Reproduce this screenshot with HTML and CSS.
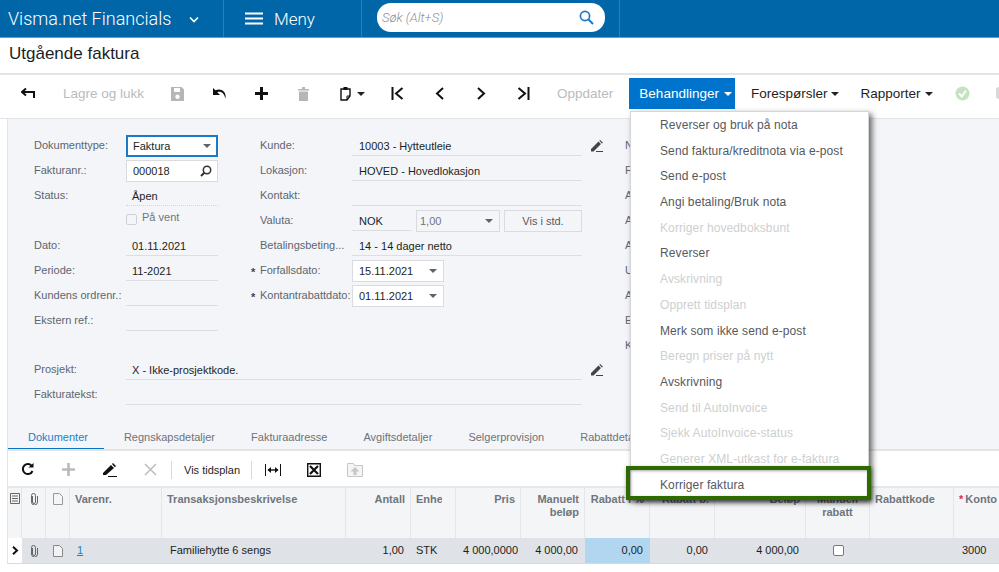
FILE: index.html
```html
<!DOCTYPE html>
<html lang="no">
<head>
<meta charset="utf-8">
<title>Utgående faktura</title>
<link rel="stylesheet" href="styles.css">
</head>
<body>
<header class="topbar">
  <div class="brand">Visma.net Financials
    <svg class="brand-chev" width="10" height="7" viewBox="0 0 10 7"><path d="M1 1.500 5 5.500 9 1.500" fill="none" stroke="#fff" stroke-width="1.600"/></svg>
  </div>
  <div class="menu-btn">
    <svg width="18" height="13" viewBox="0 0 18 13"><path d="M0 1.500h18M0 6.500h18M0 11.500h18" stroke="#fff" stroke-width="2.200"/></svg>
    <span>Meny</span>
  </div>
  <div class="search-wrap">
    <div class="search"><span>Søk (Alt+S)</span>
      <svg width="15" height="15" viewBox="0 0 15 15"><circle cx="6" cy="6" r="4.600" fill="none" stroke="#1a78c8" stroke-width="1.700"/><path d="M9.500 9.500 14 14" stroke="#1a78c8" stroke-width="1.900"/></svg>
    </div>
  </div>
</header>
<h1 class="title">Utgående faktura</h1>
<nav class="toolbar">
  <span class="tb first"><svg width="14" height="11" viewBox="0 0 14 11"><path d="M5 .5 1 4l4 3.500M1 4h12v6" fill="none" stroke="#111" stroke-width="2"/></svg></span>
  <span class="tb-text save-close">Lagre og lukk</span>
  <span class="tb"><svg width="13" height="14" viewBox="0 0 13 14"><path fill-rule="evenodd" d="M0 0h10.500L13 2.500V14H0zM3 1v4h6V1zM6.500 7.500a2.200 2.200 0 1 0 0 4.400 2.200 2.200 0 0 0 0-4.400z" fill="#b4b6b8"/></svg></span>
  <span class="tb"><svg width="15" height="11" viewBox="0 0 15 11"><path d="M1 0v7h7L5.300 4.300C8.300 3 12 4.500 13.300 10.500 15 5 10 -.5 3.500 2.300z" fill="#111"/></svg></span>
  <span class="tb"><svg width="13" height="13" viewBox="0 0 13 13"><path d="M6.500 0v13M0 6.500h13" stroke="#111" stroke-width="3"/></svg></span>
  <span class="tb"><svg width="11" height="14" viewBox="0 0 11 14"><path d="M0 2h11v1.500H0zM4 0h3v2H4zM1 4.500h9V14H1z" fill="#b4b6b8"/></svg></span>
  <span class="tb paste"><svg width="12" height="15" viewBox="0 0 12 15"><path d="M1 3h9v7l-3 4H1z" fill="none" stroke="#111" stroke-width="1.400"/><path d="M3.500 1h4v3h-4z" fill="#111"/><path d="M7 14v-4h3" fill="none" stroke="#111"/></svg><i class="caret dark"></i></span>
  <span class="tb"><svg width="13" height="13" viewBox="0 0 13 13"><path d="M1.500 0v13M11.500 1 5 6.500 11.500 12" fill="none" stroke="#111" stroke-width="2"/></svg></span>
  <span class="tb"><svg width="9" height="13" viewBox="0 0 9 13"><path d="M8 1 2 6.500 8 12" fill="none" stroke="#111" stroke-width="2"/></svg></span>
  <span class="tb"><svg width="9" height="13" viewBox="0 0 9 13"><path d="M1 1l6 5.500L1 12" fill="none" stroke="#111" stroke-width="2"/></svg></span>
  <span class="tb"><svg width="13" height="13" viewBox="0 0 13 13"><path d="M11.500 0v13M1.500 1 8 6.500 1.500 12" fill="none" stroke="#111" stroke-width="2"/></svg></span>
  <span class="tb-text refresh">Oppdater</span>
  <span class="tb-menu active">Behandlinger<i class="caret light"></i></span>
  <span class="tb-menu">Forespørsler<i class="caret dark"></i></span>
  <span class="tb-menu">Rapporter<i class="caret dark"></i></span>
  <span class="tb check"><svg width="15" height="15" viewBox="0 0 15 15"><circle cx="7.500" cy="7.500" r="7" fill="#c5e3c0"/><path d="M4 7.500 6.800 10.500 11 4.500" fill="none" stroke="#fff" stroke-width="2"/></svg></span>
  <span class="edge-dot"></span>
</nav>

<main class="card">
  <section class="form">
    <div class="form-cols">
      <div class="col col-a">
        <div class="row"><label class="lbl">Dokumenttype:</label><div class="box focus fw">Faktura<i class="caret gray"></i></div></div>
        <div class="row"><label class="lbl">Fakturanr.:</label><div class="box fw">000018
          <svg class="glass" width="12" height="12" viewBox="0 0 12 12"><circle cx="7" cy="5" r="3.700" fill="none" stroke="#333" stroke-width="1.500"/><path d="M4.300 7.700 1 11" stroke="#333" stroke-width="2"/></svg></div></div>
        <div class="row"><label class="lbl">Status:</label><div class="val dotted fw">Åpen</div></div>
        <div class="row hold"><label class="lbl"></label><span class="chk faint"></span><span class="hold-text">På vent</span></div>
        <div class="row"><label class="lbl">Dato:</label><div class="val fw">01.11.2021</div></div>
        <div class="row"><label class="lbl">Periode:</label><div class="val fw">11-2021</div></div>
        <div class="row"><label class="lbl">Kundens ordrenr.:</label><div class="val fw"></div></div>
        <div class="row"><label class="lbl">Ekstern ref.:</label><div class="val fw"></div></div>
      </div>
      <div class="col col-b">
        <div class="row"><label class="lbl">Kunde:</label><div class="val wide">10003 - Hytteutleie</div>
          <svg class="pen" width="12" height="12" viewBox="0 0 12 12"><path d="M0 9 7.500 1.500l2.500 2.500L2.500 11.500H0zM8.300.8 9.200 0 12 2.800 11 3.500z" fill="#444"/><path d="M5 11.500h7" stroke="#444"/></svg></div>
        <div class="row"><label class="lbl">Lokasjon:</label><div class="val wide">HOVED - Hovedlokasjon</div></div>
        <div class="row"><label class="lbl">Kontakt:</label><div class="val wide"></div></div>
        <div class="row"><label class="lbl">Valuta:</label><div class="val cur">NOK</div><div class="box rate muted">1,00<i class="caret gray"></i></div><div class="box std">Vis i std.</div></div>
        <div class="row"><label class="lbl">Betalingsbeting...</label><div class="val wide">14 - 14 dager netto</div></div>
        <div class="row"><label class="lbl req">Forfallsdato:</label><div class="box date">15.11.2021<i class="caret gray"></i></div></div>
        <div class="row"><label class="lbl req">Kontantrabattdato:</label><div class="box date">01.11.2021<i class="caret gray"></i></div></div>
      </div>
      <div class="col col-c">
        <div class="row"><label class="lbl">N</label></div>
        <div class="row"><label class="lbl">F</label></div>
        <div class="row"><label class="lbl">A</label></div>
        <div class="row"><label class="lbl">A</label></div>
        <div class="row"><label class="lbl">A</label></div>
        <div class="row"><label class="lbl">U</label></div>
        <div class="row"><label class="lbl">A</label></div>
        <div class="row"><label class="lbl">E</label></div>
        <div class="row"><label class="lbl">K</label></div>
      </div>
    </div>
    <div class="row"><label class="lbl">Prosjekt:</label><div class="val full">X - Ikke-prosjektkode.</div>
      <svg class="pen" width="12" height="12" viewBox="0 0 12 12"><path d="M0 9 7.500 1.500l2.500 2.500L2.500 11.500H0zM8.300.8 9.200 0 12 2.800 11 3.500z" fill="#444"/><path d="M5 11.500h7" stroke="#444"/></svg></div>
    <div class="row"><label class="lbl">Fakturatekst:</label><div class="val full"></div></div>
  </section>

  <div class="tabs">
    <span class="tab on">Dokumenter</span>
    <span class="tab">Regnskapsdetaljer</span>
    <span class="tab">Fakturaadresse</span>
    <span class="tab">Avgiftsdetaljer</span>
    <span class="tab">Selgerprovisjon</span>
    <span class="tab">Rabattdetaljer</span>
  </div>

  <div class="gridbar">
    <span class="gb"><svg width="13" height="13" viewBox="0 0 13 13"><path d="M11 3.200A5 5 0 1 0 11.500 8" fill="none" stroke="#111" stroke-width="2"/><path d="M7.500 4.500h5V0z" fill="#111"/></svg></span>
    <span class="gb"><svg width="13" height="13" viewBox="0 0 13 13"><path d="M6.500 0v13M0 6.500h13" stroke="#b8babc" stroke-width="2.600"/></svg></span>
    <span class="gb"><svg width="14" height="14" viewBox="0 0 14 14"><path d="M0 10 8 2l3 3-8 7H0zM9 1l1-1 3 3-1.200 1.200z" fill="#111"/><path d="M5 13.500h9" stroke="#111"/></svg></span>
    <span class="gb"><svg width="13" height="13" viewBox="0 0 13 13"><path d="M1 1l11 11M12 1 1 12" stroke="#bcbec0" stroke-width="1.600"/></svg></span>
    <span class="sep"></span>
    <span class="gb-text">Vis tidsplan</span>
    <span class="sep"></span>
    <span class="gb"><svg width="16" height="12" viewBox="0 0 16 12"><path d="M.5 0v12M15.500 0v12" stroke="#111"/><path d="M3 6h10" stroke="#111" stroke-width="1.400"/><path d="M6 3 2.500 6 6 9zM10 3l3.500 3L10 9z" fill="#111"/></svg></span>
    <span class="gb"><svg width="14" height="14" viewBox="0 0 14 14"><path d="M.7.700h12.600v12.600H.7z" fill="#fff" stroke="#111" stroke-width="1.400"/><path d="M3 3l8 8M11 3l-8 8" stroke="#111" stroke-width="2.200"/></svg></span>
    <span class="gb"><svg width="16" height="15" viewBox="0 0 16 15"><path d="M.5 3.500V1.500h6l1 2h8v11H.5z" fill="#f5f5f5" stroke="#c4c6c8"/><path d="M8 5 3.500 9.500h3V13h3V9.500h3z" fill="#c4c6c8"/></svg></span>
  </div>

  <div class="grid">
    <div class="gh icon-cell"><svg width="10" height="11" viewBox="0 0 10 11"><path d="M.5.500h9v10h-9zM2 3h6M2 5.500h6M2 8h6" fill="none" stroke="#666"/></svg></div>
    <div class="gh icon-cell"><svg class="clip" width="8" height="12" viewBox="0 0 8 12"><path d="M2.500 3v6a1.500 1.500 0 0 0 3 0V2.500a2 2 0 0 0-4 0V9a3 3 0 0 0 6 0V3" fill="none" stroke="#666"/></svg></div>
    <div class="gh icon-cell"><svg width="10" height="12" viewBox="0 0 10 12"><path d="M.5.500h6l3 3v8h-9z" fill="none" stroke="#999"/></svg></div>
    <div class="gh">Varenr.</div>
    <div class="gh">Transaksjonsbeskrivelse</div>
    <div class="gh r">Antall</div>
    <div class="gh"><span class="clipped">Enhet</span></div>
    <div class="gh r">Pris</div>
    <div class="gh r">Manuelt beløp</div>
    <div class="gh r nw">Rabatt i %</div>
    <div class="gh r nw">Rabatt b.</div>
    <div class="gh r">Beløp</div>
    <div class="gh c">Manuell rabatt</div>
    <div class="gh">Rabattkode</div>
    <div class="gh nw"><b class="star">*</b>Konto</div>

    <div class="gd arrow"><svg width="7" height="9" viewBox="0 0 7 9"><path d="M1 .8 5 4.500 1 8.200" fill="none" stroke="#111" stroke-width="2"/></svg></div>
    <div class="gd icon-cell"><svg width="8" height="12" viewBox="0 0 8 12"><path d="M2.500 3v6a1.500 1.500 0 0 0 3 0V2.500a2 2 0 0 0-4 0V9a3 3 0 0 0 6 0V3" fill="none" stroke="#666"/></svg></div>
    <div class="gd icon-cell"><svg width="10" height="12" viewBox="0 0 10 12"><path d="M.5.500h6l3 3v8h-9z" fill="#f2f3f4" stroke="#888"/></svg></div>
    <div class="gd"><a class="link">1</a></div>
    <div class="gd desc">Familiehytte 6 sengs</div>
    <div class="gd r">1,00</div>
    <div class="gd unit">STK</div>
    <div class="gd r price">4 000,0000</div>
    <div class="gd r">4 000,00</div>
    <div class="gd r sel">0,00</div>
    <div class="gd r">0,00</div>
    <div class="gd r">4 000,00</div>
    <div class="gd c"><span class="chk"></span></div>
    <div class="gd"></div>
    <div class="gd acct">3000</div>
  </div>
</main>

<div class="dropdown">
  <div class="mi">Reverser og bruk på nota</div>
  <div class="mi">Send faktura/kreditnota via e-post</div>
  <div class="mi">Send e-post</div>
  <div class="mi">Angi betaling/Bruk nota</div>
  <div class="mi off">Korriger hovedboksbunt</div>
  <div class="mi">Reverser</div>
  <div class="mi off">Avskrivning</div>
  <div class="mi off">Opprett tidsplan</div>
  <div class="mi">Merk som ikke send e-post</div>
  <div class="mi off">Beregn priser på nytt</div>
  <div class="mi">Avskrivning</div>
  <div class="mi off">Send til AutoInvoice</div>
  <div class="mi off">Sjekk AutoInvoice-status</div>
  <div class="mi off">Generer XML-utkast for e-faktura</div>
  <div class="mi">Korriger faktura</div>
</div>
<div class="callout"></div>
</body>
</html>
```
FILE: styles.css
```css
* { box-sizing: border-box; }
html, body { margin: 0; padding: 0; }
body {
  width: 999px; height: 572px; overflow: hidden; position: relative;
  background: #fff; color: #1b1f24;
  font: 11px "Liberation Sans", Arial, sans-serif;
}
svg { display: block; flex: none; }

/* top bar */
.topbar {
  display: flex; height: 38px; color: #fff;
  background: #0066a8; border-bottom: 1px solid #5c9fd0;
}
.brand {
  width: 224px; padding-left: 8px; display: flex; align-items: center;
  font: 300 18px Roboto, sans-serif; border-right: 1px solid #2a7fb8;
}
.brand-chev { margin-left: 18px; margin-top: 2px; }
.menu-btn {
  width: 138px; padding-left: 21px; display: flex; align-items: center; gap: 11px;
  font: 300 17px Roboto, sans-serif; border-right: 1px solid #2a7fb8;
}
.search-wrap { width: 258px; padding: 3px 0 0 15px; border-right: 1px solid #2a7fb8; }
.search {
  width: 228px; height: 29px; background: #fff; border-radius: 14px;
  display: flex; align-items: center; justify-content: space-between; padding: 0 11px 0 5px;
  color: #8b8f94; font: italic 300 13px Roboto, sans-serif;
}
.title { margin: 0; height: 35px; padding: 6px 0 0 9px; font: 400 17px/20px "Liberation Sans", sans-serif; color: #1b1f24; }

/* toolbar */
.toolbar {
  height: 46px; padding: 3px 0 0 7px; display: flex; align-items: flex-start;
  border-top: 2px solid #e3e4e6; border-bottom: 1px solid #e3e4e6;
  font-size: 13.500px;
}
.tb { width: 42px; height: 31px; display: flex; align-items: center; justify-content: center; flex: none; }
.tb.paste { width: 52px; gap: 5px; padding-left: 4px; }
.tb-text { color: #b9bbbe; line-height: 31px; flex: none; }
.save-close { padding: 0 12px 0 14px; }
.refresh { padding: 0 16px 0 12px; margin-left: 1px; }
.tb-menu { height: 31px; line-height: 31px; padding: 0 7px 0 10px; margin-right: 4px; color: #1b1f24; display: flex; align-items: center; gap: 4px; flex: none; }
.tb-menu.active { background: #0074cc; color: #fff; margin-right: 6px; padding-right: 3px; gap: 5px; }
.check { margin-left: -2px; }
.edge-dot { width: 4px; height: 12px; margin: 9px 0 0 12px; border-radius: 3px 0 0 3px; background: #d8d8d8; }
.caret { display: inline-block; width: 0; height: 0; border: 4px solid transparent; border-bottom: 0; flex: none; }
.caret.dark { border-top-color: #222; }
.caret.light { border-top-color: #fff; }
.caret.gray { border-top-color: #5f6368; }

/* card */
.card { margin-left: 7px; border-left: 1px solid #e3e4e6; }
.form { height: 301px; padding: 14px 0 0 26px; background: #f4f5f8; color: #1b1f24; }
.form-cols { display: flex; height: 224px; }
.col-a { width: 226px; }
.col-b { width: 365px; }
.col-c { width: 60px; }
.row { height: 25px; display: flex; align-items: flex-start; }
.lbl { width: 92px; flex: none; color: #5c6670; line-height: 24px; white-space: nowrap; }
.lbl.req { position: relative; }
.lbl.req::before { content: "*"; position: absolute; left: -9px; top: 2px; color: #444; font-weight: 700; }
.fw { width: 92px; }
.val { height: 23px; line-height: 26px; padding-left: 6px; border-bottom: 1px solid #dcdee1; white-space: nowrap; }
.dotted { border-bottom: 1px dotted #d0d2d5; }
.wide { width: 230px; padding-left: 7px; }
.full { width: 456px; }
.cur { width: 60px; padding-left: 7px; }
.box {
  height: 22px; margin-top: 2px; padding: 0 6px; border: 1px solid #d9dbde; background: #fff;
  display: flex; align-items: center; justify-content: space-between; white-space: nowrap;
}
.focus { border: 1px solid #1a7ac8; box-shadow: inset 0 0 0 1px #1a7ac8; }
.box.rate { width: 84px; margin-left: 4px; background: #f4f5f8; padding-left: 3px; }
.muted { color: #70767c; }
.box.std { width: 78px; margin-left: 4px; background: #f4f5f8; justify-content: center; color: #555b61; }
.box.date { width: 92px; }
.hold { align-items: center; }
.hold-text { color: #70767c; margin: -8px 0 0 5px; }
.chk { display: block; width: 11px; height: 11px; border: 1px solid #777; border-radius: 2px; background: #fff; }
.chk.faint { margin-top: -2px; border-color: #cfd1d4; background: #f4f5f8; }
.pen { margin: 7px 0 0 9px; }
.glass { margin-right: -1px; }

/* tabs */
.tabs { height: 31px; display: flex; background: #f4f5f8; border-bottom: 2px solid #e3e4e6; overflow: hidden; }
.tab { padding: 0 16px 0 20px; line-height: 34px; height: 31px; color: #6d7379; white-space: nowrap; flex: none; }
.tab.on { color: #1d7fc6; border-bottom: 3px solid #0a74c4; }

/* grid toolbar */
.gridbar { height: 37px; display: flex; align-items: center; margin-left: -1px; }
.gb { width: 41px; display: flex; justify-content: center; flex: none; }
.gb-text { padding: 0 11px 0 12px; color: #1b1f24; }
.sep { width: 1px; height: 18px; background: #d5d7da; }

/* grid */
.grid {
  display: grid;
  grid-template-columns: 14px 24px 24px 92px 184px 65px 45px 65px 64px 65px 65px 91px 64px 84px 46px;
  grid-template-rows: 50px 26px;
  border-top: 2px solid #e6e7e9; margin-top: -2px;
}
.gh {
  background: #f4f5f7; padding: 5px 5px 0; border-right: 1px solid #e4e6e8;
  color: #6f767d; font-weight: 700; line-height: 13px; overflow: hidden;
}
.gh.icon-cell { padding: 5px 0 0; display: flex; justify-content: center; }
.gh.r { text-align: right; }
.gh.c { text-align: center; }
.gh.nw { white-space: nowrap; }
.clipped { display: block; width: 26px; overflow: hidden; }
.star { color: #d33; margin-right: 2px; }
.gd {
  background: #dfe2e6; line-height: 25px; padding: 0 7px; border-bottom: 1px solid #d8dadd; white-space: nowrap;
}
.gd.r { text-align: right; }
.gd.c { display: flex; align-items: center; justify-content: center; }
.gd.icon-cell { display: flex; align-items: center; justify-content: center; padding: 0; }
.gd.arrow { background: #fff; display: flex; align-items: center; justify-content: center; padding: 0; }
.gd.desc { padding-left: 8px; }
.gd.unit { padding-left: 5px; }
.gd.price { padding-right: 5px; }
.gd.sel { background: #b3d6f0; }
.gd.acct { padding: 0 0 0 8px; }
.link { color: #1d7fc6; text-decoration: underline; }

/* dropdown overlay */
.dropdown {
  position: absolute; left: 630px; top: 111px; width: 239px; padding: 1px 0 0;
  background: #fff; border: 1px solid #d5d6d8; box-shadow: 3px 3px 6px rgba(0,0,0,.6);
  font-size: 12px; letter-spacing: .1px;
}
.mi { height: 25.700px; line-height: 25.700px; padding-left: 29px; color: #55595e; white-space: nowrap; }
.mi.off { color: #cdcfd1; }
.callout {
  position: absolute; left: 626px; top: 466px; width: 245px; height: 34px;
  border: 4px solid #2f6a00; box-shadow: 1px 2px 4px rgba(0,0,0,.5), inset 1px 1px 3px rgba(0,0,0,.35);
}
```
